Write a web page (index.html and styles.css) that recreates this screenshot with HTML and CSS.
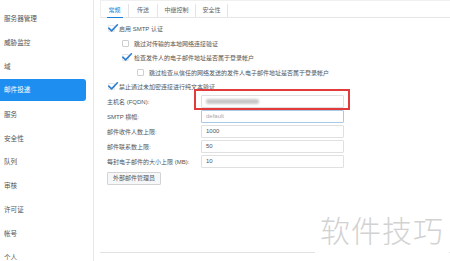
FILE: index.html
```html
<!DOCTYPE html>
<html lang="zh">
<head>
<meta charset="utf-8">
<title>邮件投递</title>
<link rel="stylesheet" href="styles.css">
</head>
<body>
<div class="app">
  <nav class="sidebar">
    <div class="nav-item">服务器管理</div>
    <div class="nav-item">威胁监控</div>
    <div class="nav-item">域</div>
    <div class="nav-item active">邮件投递</div>
    <div class="nav-item">服务</div>
    <div class="nav-item">安全性</div>
    <div class="nav-item">队列</div>
    <div class="nav-item">审核</div>
    <div class="nav-item">许可证</div>
    <div class="nav-item">帐号</div>
    <div class="nav-item">个人</div>
  </nav>
  <main class="content">
    <div class="tabs">
      <div class="tab active">常规</div>
      <div class="tab t2">传送</div>
      <div class="tab t3">中继控制</div>
      <div class="tab t4">安全性</div>
    </div>
    <div class="options">
      <div class="opt lv1"><span class="cb checked"><svg viewBox="0 0 10 8"><path d="M0.8 4.2 L3.6 6.9 L9.4 0.8" /></svg></span><span>启用 SMTP 认证</span></div>
      <div class="opt lv2"><span class="cb"></span><span>跳过对传输的本地网络连接验证</span></div>
      <div class="opt lv2"><span class="cb checked"><svg viewBox="0 0 10 8"><path d="M0.8 4.2 L3.6 6.9 L9.4 0.8" /></svg></span><span>检查发件人的电子邮件地址是否属于登录帐户</span></div>
      <div class="opt lv3"><span class="cb"></span><span>跳过检查从信任的网络发送的发件人电子邮件地址是否属于登录帐户</span></div>
      <div class="opt lv1"><span class="cb checked"><svg viewBox="0 0 10 8"><path d="M0.8 4.2 L3.6 6.9 L9.4 0.8" /></svg></span><span>禁止通过未加密连接进行纯文本验证</span></div>
    </div>
    <div class="form">
      <label class="lbl">主机名 (FQDN):</label>
      <div class="input"><span class="blurred"></span></div>
      <label class="lbl">SMTP 横幅:</label>
      <div class="input focus placeholder">default</div>
      <label class="lbl">邮件收件人数上限:</label>
      <div class="input">1000</div>
      <label class="lbl">邮件联系数上限:</label>
      <div class="input">50</div>
      <label class="lbl">每封电子邮件的大小上限 (MB):</label>
      <div class="input">10</div>
    </div>
    <button class="btn">外部邮件管理员</button>
    <div class="spacer"></div>
    <div class="footer-line"></div>
  </main>
  <div class="highlight"></div>
  <div class="watermark">软件技巧</div>
</div>
</body>
</html>
```
FILE: styles.css
```css
* { box-sizing: border-box; }
html, body { margin: 0; padding: 0; background: #fff; }
body {
  width: 450px;
  height: 261px;
  overflow: hidden;
  font-family: "Liberation Sans", "Noto Sans CJK SC", sans-serif;
  color: #555;
}
.app {
  position: relative;
  display: flex;
  width: 450px;
  height: 261px;
}
.sidebar {
  width: 94px;
  flex: none;
  border-right: 1px solid #e8e8e8;
  padding-top: 7.4px;
  display: flex;
  flex-direction: column;
}
.nav-item {
  width: 86px;
  height: 23.85px;
  line-height: 23.85px;
  flex: none;
  padding-left: 4px;
  font-size: 6.6px;
  color: #555;
  white-space: nowrap;
}
.nav-item.active {
  background: #1f8ef1;
  color: #fff;
  border-radius: 0 3px 3px 0;
  height: 22px;
  line-height: 22px;
  margin: 0 0 1.85px;
}
.content {
  flex: 1;
  display: flex;
  flex-direction: column;
  padding-left: 13px;
  font-size: 6px;
  color: #555;
}
.tabs {
  display: flex;
  margin-left: -7px;
  height: 18px;
  padding-top: 3px;
  border-bottom: 1px solid #e6e6e6;
  border-top: 1px solid #f0f0f0;
  border-left: 1px solid #eee;
}
.tab {
  height: 14px;
  line-height: 13px;
  text-align: center;
  font-size: 6px;
  color: #666;
  border-right: 1px solid #e4e4e4;
}
.tab.active { width: 28px; color: #1e7fd8; position: relative; }
.tab.active::after {
  content: "";
  position: absolute;
  left: 6px; right: 5px; bottom: 0;
  height: 1.5px;
  background: #1e7fd8;
}
.tab.t2 { width: 29px; }
.tab.t3 { width: 38px; }
.tab.t4 { width: 32px; }
.options {
  margin-top: 3.5px;
  display: flex;
  flex-direction: column;
}
.opt {
  height: 14.5px;
  display: flex;
  align-items: center;
  gap: 4px;
  white-space: nowrap;
}
.opt.lv1 { margin-left: 1px; }
.opt.lv2 { margin-left: 15px; }
.opt.lv3 { margin-left: 30px; }
.cb {
  position: relative;
  width: 7px;
  height: 7px;
  border: 1px solid #cfcfcf;
  border-radius: 1px;
  background: #fff;
  flex: none;
}
.opt.lv2 .cb, .opt.lv3 .cb { margin-right: 1px; }
.cb.checked { border-color: #e4e4e4; }
.cb svg {
  position: absolute;
  left: -1px;
  top: -2px;
  width: 10px;
  height: 8px;
  overflow: visible;
}
.cb svg path {
  fill: none;
  stroke: #2a7ed6;
  stroke-width: 1.6;
  stroke-linecap: round;
  stroke-linejoin: round;
}
.form {
  margin-top: 1px;
  display: grid;
  grid-template-columns: 94px 143px;
  grid-auto-rows: 13px;
  row-gap: 2px;
  align-items: center;
}
.lbl {
  font-size: 6px;
  color: #555;
  white-space: nowrap;
}
.input {
  height: 13px;
  border: 1px solid #e0e0e0;
  border-radius: 1px;
  padding-left: 4px;
  line-height: 11px;
  font-size: 6px;
  color: #555;
  display: flex;
  align-items: center;
}
.input.focus { border-color: #a9c9e8; }
.input.placeholder { color: #aaa; }
.blurred {
  display: block;
  width: 53px;
  height: 5px;
  background: #c8c8c8;
  border-radius: 2px;
  filter: blur(1.2px);
}
.btn {
  margin-top: 4px;
  width: 54px;
  height: 13px;
  padding: 0;
  border: 1px solid #d4d4d4;
  border-radius: 1px;
  background: #f6f7f8;
  font-family: inherit;
  font-size: 6px;
  color: #555;
  line-height: 11px;
}
.spacer { flex: 1; }
.footer-line {
  margin-left: -7px;
  height: 9px;
  border-top: 1px solid #e2e2e2;
}
.highlight {
  position: absolute;
  left: 194px;
  top: 89px;
  width: 156px;
  height: 21px;
  border: 2px solid #e23b3b;
}
.watermark {
  position: absolute;
  left: 315px;
  top: 204px;
  padding: 0 5px 0 5px;
  background: #fff;
  font-family: "Noto Sans CJK SC", sans-serif;
  font-weight: 300;
  font-size: 30px;
  line-height: 50px;
  color: #d2d2d2;
  letter-spacing: 1px;
}
```
